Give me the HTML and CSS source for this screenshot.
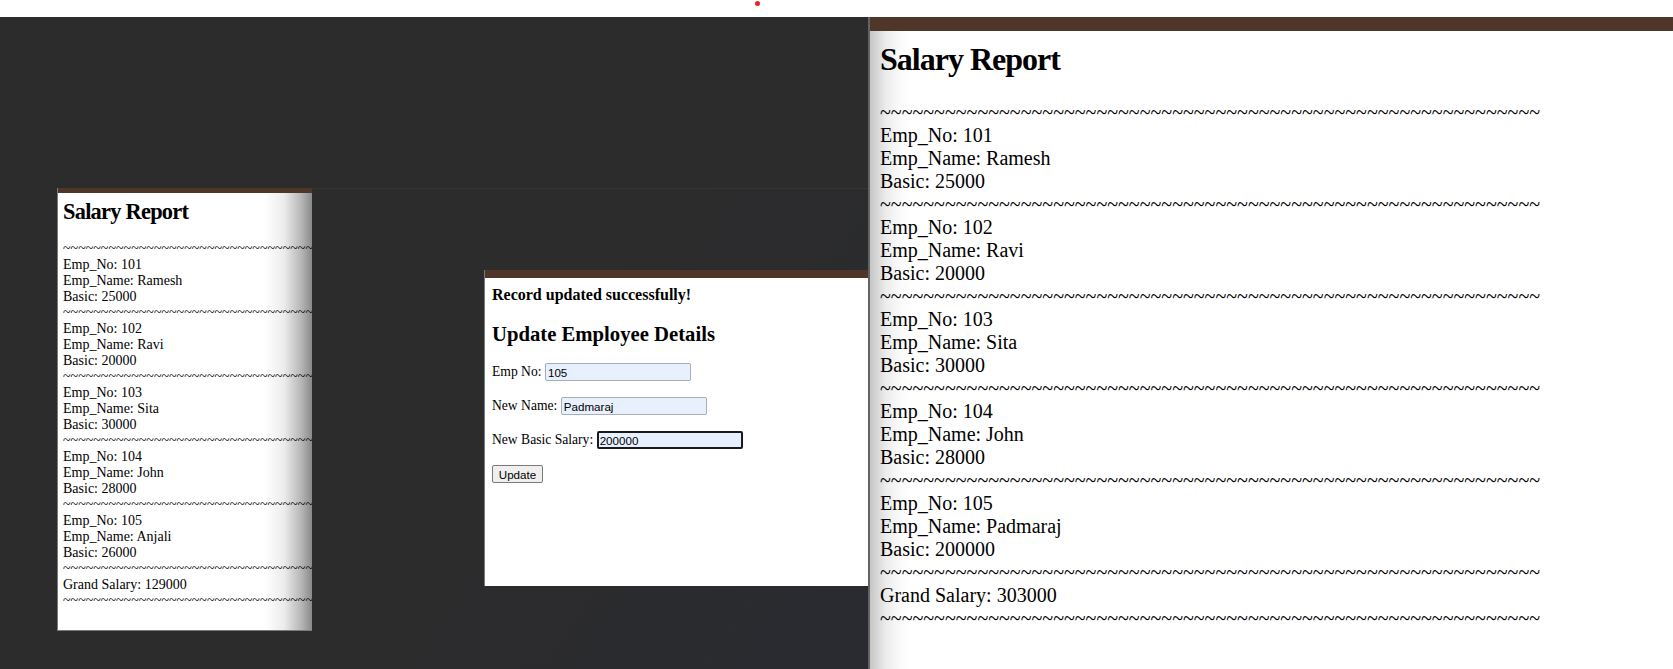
FILE: index.html
```html
<!DOCTYPE html>
<html>
<head>
<meta charset="utf-8">
<title>Salary Report</title>
<link rel="stylesheet" href="styles.css">
</head>
<body>
<div class="topbar"><span class="rec-dot"></span></div>
<div class="desktop">
  <div class="backwin"></div>

  <div class="win win-left">
    <div class="win-bar"></div>
    <div class="report">
      <h1 class="report-title">Salary Report</h1>
      <p class="lines">~~~~~~~~~~~~~~~~~~~~~~~~~~~~~~~~~<br>Emp_No: 101<br>Emp_Name: Ramesh<br>Basic: 25000<br>~~~~~~~~~~~~~~~~~~~~~~~~~~~~~~~~~<br>Emp_No: 102<br>Emp_Name: Ravi<br>Basic: 20000<br>~~~~~~~~~~~~~~~~~~~~~~~~~~~~~~~~~<br>Emp_No: 103<br>Emp_Name: Sita<br>Basic: 30000<br>~~~~~~~~~~~~~~~~~~~~~~~~~~~~~~~~~<br>Emp_No: 104<br>Emp_Name: John<br>Basic: 28000<br>~~~~~~~~~~~~~~~~~~~~~~~~~~~~~~~~~<br>Emp_No: 105<br>Emp_Name: Anjali<br>Basic: 26000<br>~~~~~~~~~~~~~~~~~~~~~~~~~~~~~~~~~<br>Grand Salary: 129000<br>~~~~~~~~~~~~~~~~~~~~~~~~~~~~~~~~~</p>
    </div>
  </div>

  <div class="win win-mid">
    <div class="win-bar"></div>
    <div class="form-page">
      <h3 class="msg">Record updated successfully!</h3>
      <h2 class="form-title">Update Employee Details</h2>
      <form class="form">
        <div class="field"><label>Emp No:</label><input type="text" value="105"></div>
        <div class="field"><label>New Name:</label><input type="text" value="Padmaraj"></div>
        <div class="field"><label>New Basic Salary:</label><input class="focused" type="text" value="200000"></div>
        <div class="field"><button type="button">Update</button></div>
      </form>
    </div>
  </div>

  <div class="win win-right">
    <div class="win-bar"></div>
    <div class="report">
      <h1 class="report-title">Salary Report</h1>
      <p class="lines">~~~~~~~~~~~~~~~~~~~~~~~~~~~~~~~~~~~~~~~~~~~~~~~~~~~~~~~~~~~~~<br>Emp_No: 101<br>Emp_Name: Ramesh<br>Basic: 25000<br>~~~~~~~~~~~~~~~~~~~~~~~~~~~~~~~~~~~~~~~~~~~~~~~~~~~~~~~~~~~~~<br>Emp_No: 102<br>Emp_Name: Ravi<br>Basic: 20000<br>~~~~~~~~~~~~~~~~~~~~~~~~~~~~~~~~~~~~~~~~~~~~~~~~~~~~~~~~~~~~~<br>Emp_No: 103<br>Emp_Name: Sita<br>Basic: 30000<br>~~~~~~~~~~~~~~~~~~~~~~~~~~~~~~~~~~~~~~~~~~~~~~~~~~~~~~~~~~~~~<br>Emp_No: 104<br>Emp_Name: John<br>Basic: 28000<br>~~~~~~~~~~~~~~~~~~~~~~~~~~~~~~~~~~~~~~~~~~~~~~~~~~~~~~~~~~~~~<br>Emp_No: 105<br>Emp_Name: Padmaraj<br>Basic: 200000<br>~~~~~~~~~~~~~~~~~~~~~~~~~~~~~~~~~~~~~~~~~~~~~~~~~~~~~~~~~~~~~<br>Grand Salary: 303000<br>~~~~~~~~~~~~~~~~~~~~~~~~~~~~~~~~~~~~~~~~~~~~~~~~~~~~~~~~~~~~~</p>
    </div>
  </div>
</div>
</body>
</html>
```

FILE: styles.css
```css
* { box-sizing: border-box; }
html, body { margin: 0; padding: 0; }
body {
  width: 1673px;
  height: 669px;
  overflow: hidden;
  background: #fff;
  color: #000;
  font-family: "Liberation Serif", "Times New Roman", serif;
}

.topbar { position: relative; height: 17px; background: #fff; }
.rec-dot {
  position: absolute;
  left: 755px;
  top: 1px;
  width: 5px;
  height: 5px;
  border-radius: 50%;
  background: #e4252a;
}

.desktop { position: relative; height: 652px; background: #2c2c2c; }

.backwin {
  position: absolute;
  left: 312px;
  top: 171px;
  width: 557px;
  height: 481px;
  border-top: 1px solid #363636;
  background: linear-gradient(125deg, #2c2c2c 35%, #2a2b31 100%);
}

.win { position: absolute; background: #fff; overflow: hidden; }
.win-bar { background: #4e3629; }

/* left small report window */
.win-left {
  left: 57px;
  top: 171px;
  width: 255px;
  height: 443px;
  border-left: 1px solid #7a7a7a;
  border-bottom: 1px solid #7a7a7a;
  background: linear-gradient(to right, #fff 0, #fff 81%, #ececec 89%, #b4b4b4 96%, #8a8a8a 100%);
}
.win-left .win-bar { height: 5px; }
.win-left .report { padding: 6px 0 0 5px; }
.win-left .report-title { font-size: 22.4px; line-height: 26px; margin: 0 0 16px; letter-spacing: -0.75px; }
.win-left .lines { font-size: 14px; line-height: 16px; }

/* middle form window */
.win-mid {
  left: 484px;
  top: 253px;
  width: 384px;
  height: 316px;
  border-left: 1px solid #7a7a7a;
}
.win-mid .win-bar { height: 8px; }
.form-page { padding: 8px 0 0 7px; }
.msg { margin: 0; font-size: 16px; line-height: 18px; font-weight: bold; }
.form-title { margin: 18px 0 17px; font-size: 20.7px; line-height: 24px; font-weight: bold; }
.form { display: flex; flex-direction: column; gap: 16px; }
.field { display: flex; align-items: center; height: 18px; font-size: 13.6px; }
.field label { margin-right: 3.5px; }
.field input {
  width: 146px;
  height: 18px;
  padding: 0 2px;
  border: 1px solid #a7adb9;
  border-radius: 2px;
  background: #e8f0fe;
  color: #000;
  font-family: "Liberation Sans", Arial, sans-serif;
  font-size: 11.6px;
  outline: none;
}
.field input.focused { border: 2px solid #1a1a1a; padding: 0 1px; }
.field button {
  width: 51px;
  height: 18px;
  padding: 0;
  border: 1px solid #7a7a7a;
  border-radius: 2px;
  background: #efefef;
  color: #000;
  font-family: "Liberation Sans", Arial, sans-serif;
  font-size: 11.6px;
}

/* right big report window */
.win-right {
  left: 868px;
  top: 0;
  width: 805px;
  height: 652px;
  border-left: 2px solid #646464;
  background: linear-gradient(to right, #c6c6c6 0, #ececec 16px, #fafafa 30px, #fff 40px);
}
.win-right .win-bar { height: 14px; }
.win-right .report { padding: 10px 0 0 10px; }
.win-right .report-title { font-size: 32px; line-height: 37px; margin: 0 0 23px; letter-spacing: -1px; }
.win-right .lines { font-size: 20px; line-height: 23px; }

.report-title { font-weight: bold; }
.lines { margin: 0; white-space: nowrap; }
```
